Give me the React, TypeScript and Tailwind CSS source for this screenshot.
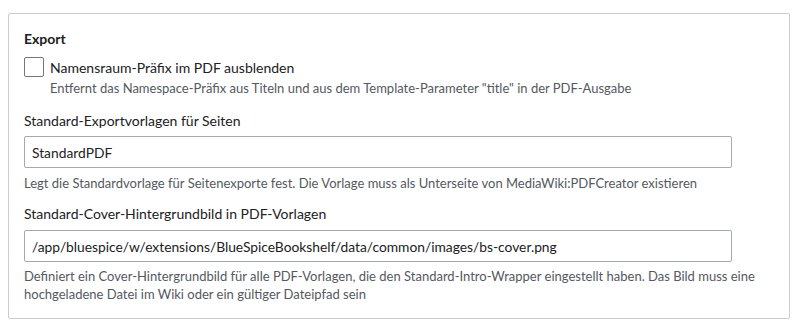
export default function App() {
  return (
    <div className="min-h-screen bg-white pl-[8px] pt-[13px] text-[#202122]" style={{ fontFamily: 'Lato, "Noto Sans", sans-serif' }}>
      <div className="w-[782px] rounded-[2px] border border-[#c8ccd1] px-[15px] pb-[15px] pt-[15px]">
        <h3 className="text-[14px] font-bold leading-[20px]">Export</h3>

        <div className="mt-[8px] flex items-start gap-[6px]">
          <span className="block size-[20px] shrink-0 rounded-[2px] border border-[#72777d] bg-white" />
          <div className="pt-[1px]">
            <p className="text-[14px] leading-[20px]">Namensraum-Präfix im PDF ausblenden</p>
            <p className="mt-[1px] text-[13px] leading-[18px] text-[#54595d]">
              Entfernt das Namespace-Präfix aus Titeln und aus dem Template-Parameter "title" in der PDF-Ausgabe
            </p>
          </div>
        </div>

        <label className="mt-[14px] block text-[14px] leading-[20px]">Standard-Exportvorlagen für Seiten</label>
        <input
          readOnly
          value="StandardPDF"
          className="mt-[5px] block h-[32px] w-[708px] rounded-[2px] border border-[#a2a9b1] bg-white px-[7px] text-[13.8px] text-[#202122] outline-none"
        />
        <p className="mt-[6px] text-[13px] leading-[18px] text-[#54595d]">
          Legt die Standardvorlage für Seitenexporte fest. Die Vorlage muss als Unterseite von MediaWiki:PDFCreator existieren
        </p>

        <label className="mt-[12px] block text-[14px] leading-[20px]">Standard-Cover-Hintergrundbild in PDF-Vorlagen</label>
        <input
          readOnly
          value="/app/bluespice/w/extensions/BlueSpiceBookshelf/data/common/images/bs-cover.png"
          className="mt-[6px] block h-[32px] w-[708px] rounded-[2px] border border-[#a2a9b1] bg-white px-[7px] text-[13.8px] text-[#202122] outline-none"
        />
        <p className="mt-[5px] whitespace-nowrap text-[13px] leading-[18px] text-[#54595d]">
          Definiert ein Cover-Hintergrundbild für alle PDF-Vorlagen, die den Standard-Intro-Wrapper eingestellt haben. Das Bild muss eine
          <br />
          hochgeladene Datei im Wiki oder ein gültiger Dateipfad sein
        </p>
      </div>
    </div>
  )
}
